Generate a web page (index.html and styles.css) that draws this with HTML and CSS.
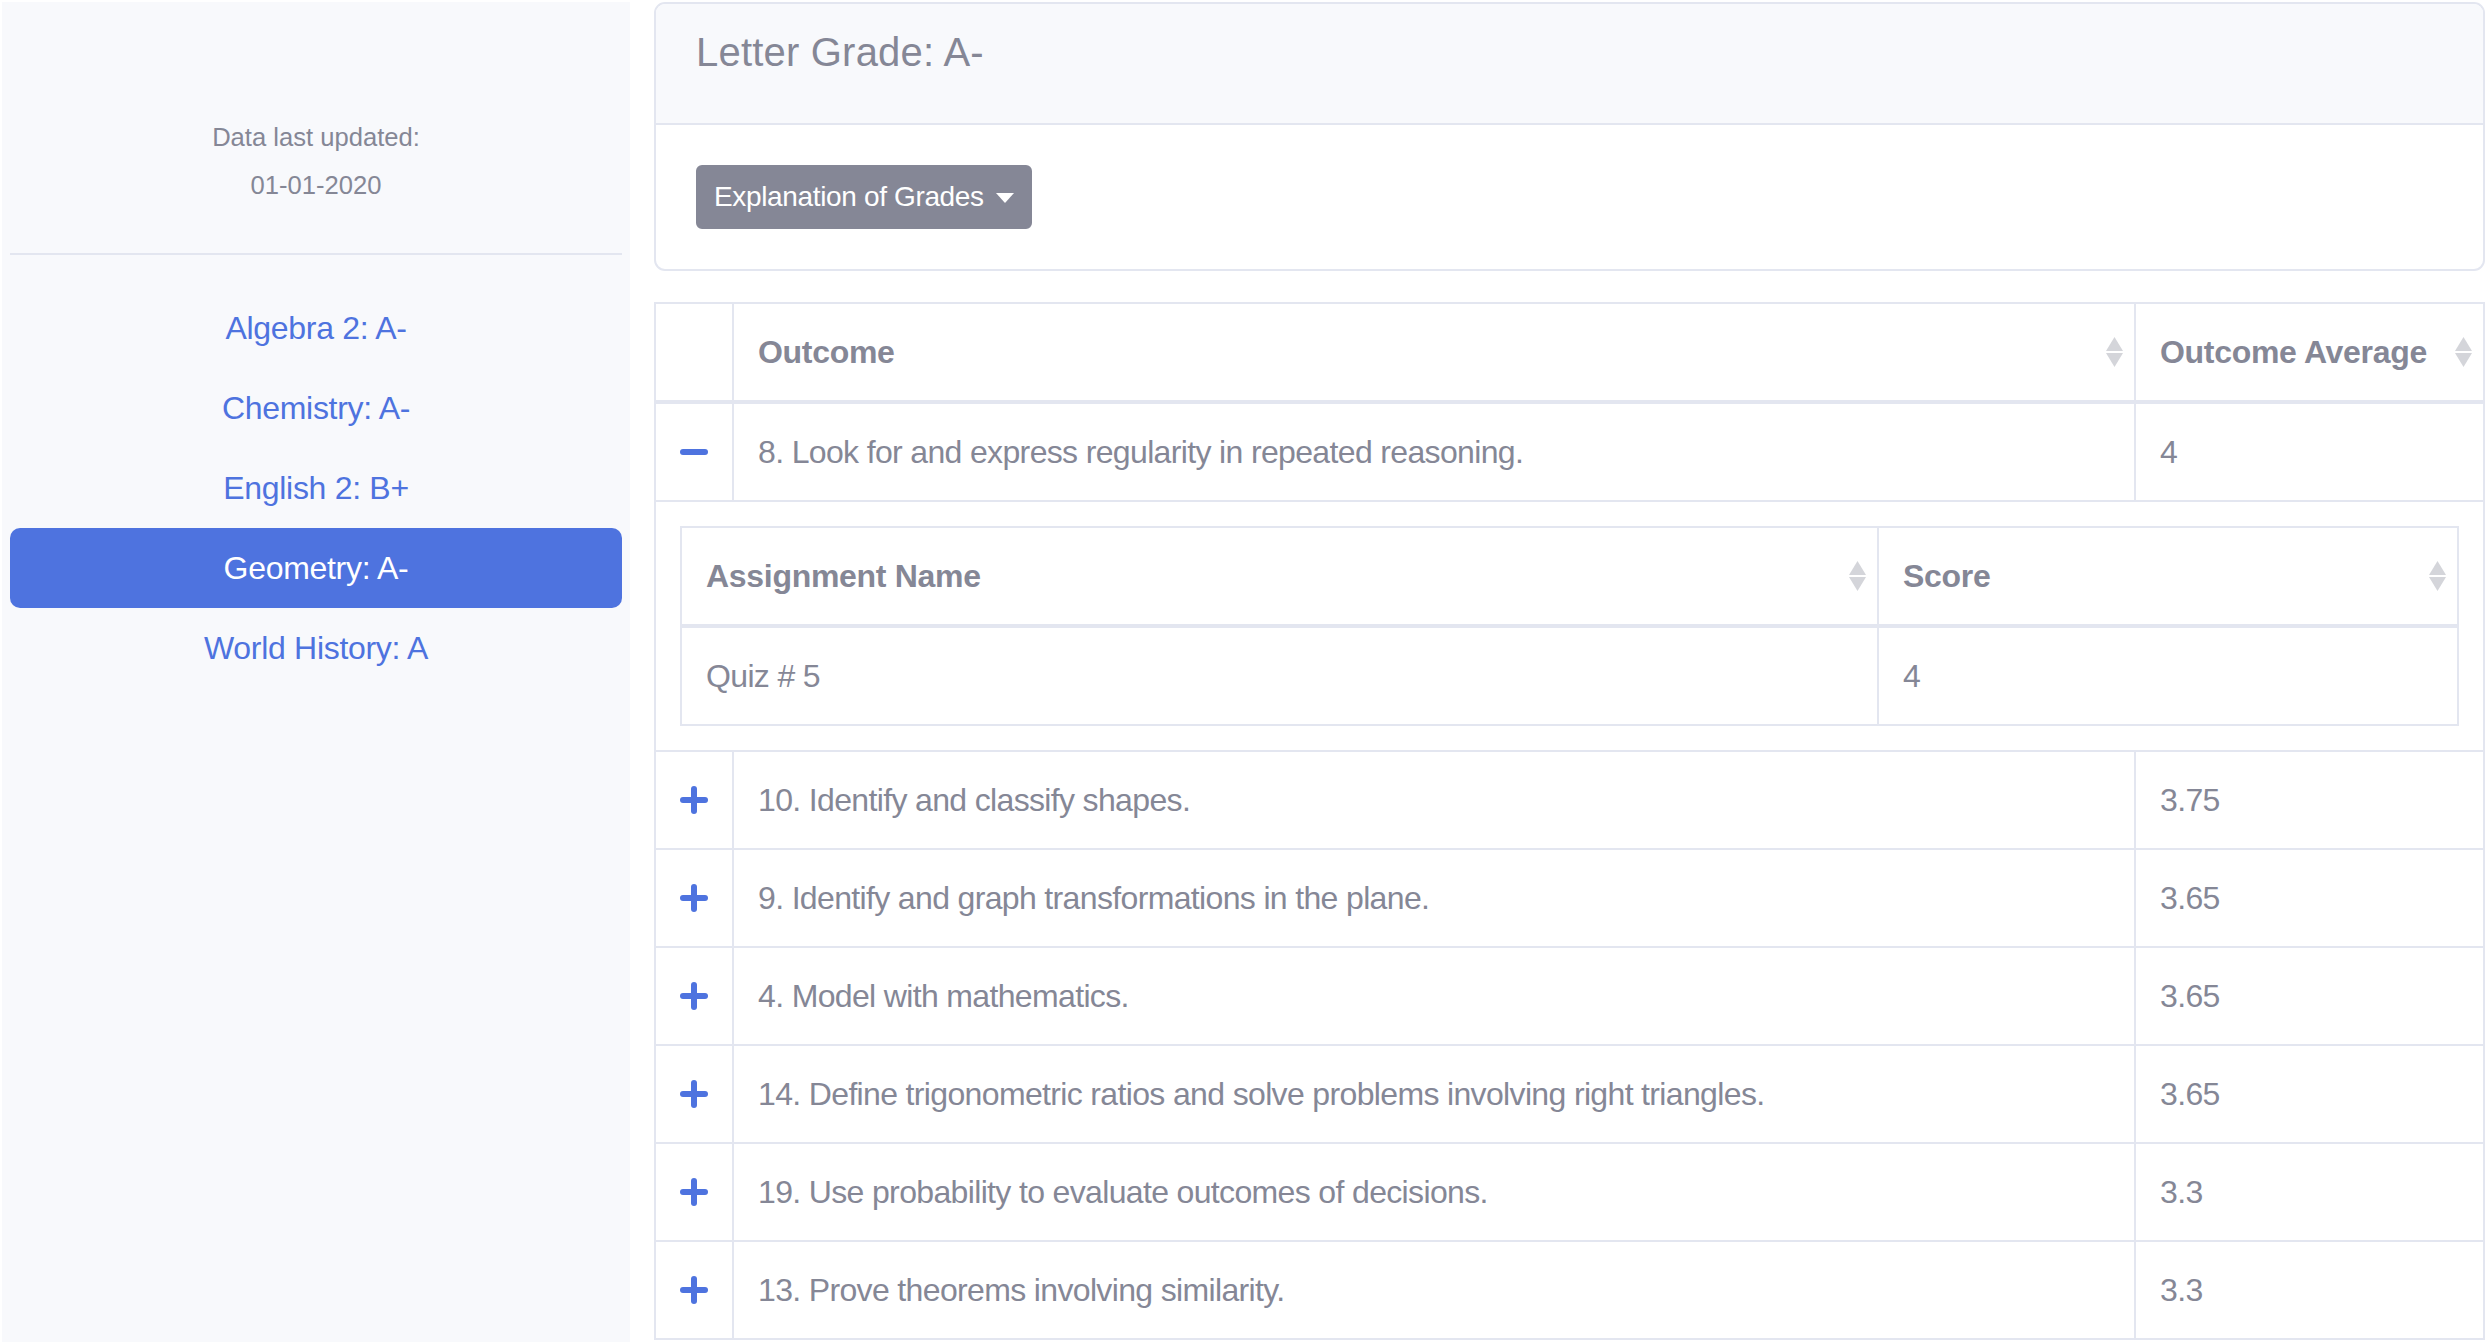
FILE: index.html
```html
<!DOCTYPE html>
<html lang="en">
<head>
<meta charset="utf-8">
<title>Grades</title>
<link rel="stylesheet" href="styles.css">
</head>
<body>
<div class="page">
  <aside class="sidebar">
    <div class="updated">
      <div>Data last updated:</div>
      <div>01-01-2020</div>
    </div>
    <hr class="divider">
    <nav class="nav">
      <a class="nav-link" href="#">Algebra 2: A-</a>
      <a class="nav-link" href="#">Chemistry: A-</a>
      <a class="nav-link" href="#">English 2: B+</a>
      <a class="nav-link active" href="#">Geometry: A-</a>
      <a class="nav-link" href="#">World History: A</a>
    </nav>
  </aside>

  <main class="main">
    <section class="card">
      <div class="card-header">
        <h4 class="grade-title">Letter Grade: A-</h4>
      </div>
      <div class="card-body">
        <button class="btn" type="button">Explanation of Grades<span class="caret"></span></button>
      </div>
    </section>

    <table class="outcomes">
      <colgroup>
        <col class="col-icon">
        <col>
        <col class="col-avg">
      </colgroup>
      <thead>
        <tr>
          <th></th>
          <th><div class="th-flex"><span>Outcome</span><svg class="sort" viewBox="0 0 17 30" width="17" height="30"><path d="M8.5 0 L17 14 L0 14 Z"/><path d="M0 16 L17 16 L8.5 30 Z"/></svg></div></th>
          <th><div class="th-flex"><span>Outcome Average</span><svg class="sort" viewBox="0 0 17 30" width="17" height="30"><path d="M8.5 0 L17 14 L0 14 Z"/><path d="M0 16 L17 16 L8.5 30 Z"/></svg></div></th>
        </tr>
      </thead>
      <tbody>
        <tr>
          <td class="icon-cell"><svg class="toggle" viewBox="0 0 28 28" width="28" height="28"><line x1="3" y1="14" x2="25" y2="14"/></svg></td>
          <td>8. Look for and express regularity in repeated reasoning.</td>
          <td>4</td>
        </tr>
        <tr class="detail-row">
          <td colspan="3" class="detail-cell">
            <table class="assignments">
              <colgroup>
                <col>
                <col class="col-score">
              </colgroup>
              <thead>
                <tr>
                  <th><div class="th-flex"><span>Assignment Name</span><svg class="sort" viewBox="0 0 17 30" width="17" height="30"><path d="M8.5 0 L17 14 L0 14 Z"/><path d="M0 16 L17 16 L8.5 30 Z"/></svg></div></th>
                  <th><div class="th-flex"><span>Score</span><svg class="sort" viewBox="0 0 17 30" width="17" height="30"><path d="M8.5 0 L17 14 L0 14 Z"/><path d="M0 16 L17 16 L8.5 30 Z"/></svg></div></th>
                </tr>
              </thead>
              <tbody>
                <tr>
                  <td>Quiz # 5</td>
                  <td>4</td>
                </tr>
              </tbody>
            </table>
          </td>
        </tr>
        <tr>
          <td class="icon-cell"><svg class="toggle" viewBox="0 0 28 28" width="28" height="28"><line x1="3" y1="14" x2="25" y2="14"/><line x1="14" y1="3" x2="14" y2="25"/></svg></td>
          <td>10. Identify and classify shapes.</td>
          <td>3.75</td>
        </tr>
        <tr>
          <td class="icon-cell"><svg class="toggle" viewBox="0 0 28 28" width="28" height="28"><line x1="3" y1="14" x2="25" y2="14"/><line x1="14" y1="3" x2="14" y2="25"/></svg></td>
          <td>9. Identify and graph transformations in the plane.</td>
          <td>3.65</td>
        </tr>
        <tr>
          <td class="icon-cell"><svg class="toggle" viewBox="0 0 28 28" width="28" height="28"><line x1="3" y1="14" x2="25" y2="14"/><line x1="14" y1="3" x2="14" y2="25"/></svg></td>
          <td>4. Model with mathematics.</td>
          <td>3.65</td>
        </tr>
        <tr>
          <td class="icon-cell"><svg class="toggle" viewBox="0 0 28 28" width="28" height="28"><line x1="3" y1="14" x2="25" y2="14"/><line x1="14" y1="3" x2="14" y2="25"/></svg></td>
          <td>14. Define trigonometric ratios and solve problems involving right triangles.</td>
          <td>3.65</td>
        </tr>
        <tr>
          <td class="icon-cell"><svg class="toggle" viewBox="0 0 28 28" width="28" height="28"><line x1="3" y1="14" x2="25" y2="14"/><line x1="14" y1="3" x2="14" y2="25"/></svg></td>
          <td>19. Use probability to evaluate outcomes of decisions.</td>
          <td>3.3</td>
        </tr>
        <tr>
          <td class="icon-cell"><svg class="toggle" viewBox="0 0 28 28" width="28" height="28"><line x1="3" y1="14" x2="25" y2="14"/><line x1="14" y1="3" x2="14" y2="25"/></svg></td>
          <td>13. Prove theorems involving similarity.</td>
          <td>3.3</td>
        </tr>
      </tbody>
    </table>
  </main>
</div>
</body>
</html>
```

FILE: styles.css
```css
html, body {
  margin: 0;
  padding: 0;
  height: 100%;
  overflow: hidden;
  background: #ffffff;
}

body {
  font-family: "Liberation Sans", Arial, sans-serif;
  color: #858796;
  font-size: 32px;
  line-height: 48px;
}

.page {
  display: flex;
  gap: 24px;
  padding: 2px 3px 0 2px;
  height: 100vh;
  box-sizing: border-box;
}

/* Sidebar */
.sidebar {
  width: 628px;
  flex: 0 0 628px;
  background: #f8f9fc;
  padding: 0 8px;
  box-sizing: border-box;
  display: flex;
  flex-direction: column;
}

.updated {
  padding-top: 111px;
  font-size: 25.6px;
  line-height: 48px;
  text-align: center;
  color: #858796;
}

.divider {
  margin: 44px 0 0 0;
  border: 0;
  border-top: 2px solid #e3e6f0;
  height: 0;
}

.nav {
  margin-top: 33px;
  display: flex;
  flex-direction: column;
}

.nav-link {
  display: block;
  padding: 16px 32px;
  text-align: center;
  color: #4e73df;
  text-decoration: none;
  font-size: 32px;
  line-height: 48px;
  letter-spacing: -0.3px;
  border-radius: 10px;
}

.nav-link.active {
  background: #4e73df;
  color: #ffffff;
}

/* Main */
.main {
  flex: 1 1 auto;
  min-width: 0;
}

.card {
  border: 2px solid #e3e6f0;
  border-radius: 11px;
  overflow: hidden;
  background: #fff;
}

.card-header {
  background: #f8f9fc;
  border-bottom: 2px solid #e3e6f0;
  padding: 24px 40px 47px 40px;
}

.grade-title {
  margin: 0;
  font-size: 40px;
  line-height: 48px;
  font-weight: 400;
  letter-spacing: 0.2px;
  color: #858796;
}

.card-body {
  padding: 40px 40px 40px 40px;
}

.btn {
  display: inline-flex;
  align-items: center;
  font-family: inherit;
  font-size: 28px;
  line-height: 42px;
  letter-spacing: -0.35px;
  padding: 9px 16px 9px 16px;
  color: #ffffff;
  background: #858796;
  border: 2px solid #858796;
  border-radius: 6px;
  cursor: pointer;
}

.caret {
  display: inline-block;
  width: 0;
  height: 0;
  margin-left: 12px;
  margin-top: 2px;
  border-top: 10px solid #ffffff;
  border-left: 9px solid transparent;
  border-right: 9px solid transparent;
}

/* Tables */
.outcomes {
  margin-top: 31px;
  width: 100%;
  border-collapse: collapse;
  table-layout: fixed;
}

.col-icon {
  width: 78px;
}

.col-avg {
  width: 349px;
}

.col-score {
  width: 580px;
}

.outcomes th,
.outcomes td {
  border: 2px solid #e3e6f0;
  padding: 24px;
  text-align: left;
  vertical-align: middle;
  font-size: 32px;
  line-height: 48px;
  letter-spacing: -0.65px;
  white-space: nowrap;
}

.outcomes thead th {
  border-bottom-width: 4px;
  font-weight: 700;
  letter-spacing: -0.3px;
  padding-right: 11px;
}

.th-flex {
  display: flex;
  align-items: center;
  justify-content: space-between;
}

.sort {
  display: block;
  fill: #d4d5da;
}

.icon-cell {
  text-align: center;
  padding: 24px 0;
}

.icon-cell .toggle {
  display: block;
  margin: 0 auto;
  stroke: #4e73df;
  stroke-width: 6;
  stroke-linecap: round;
}

.outcomes td.detail-cell {
  padding: 24px;
}

.assignments {
  width: 100%;
  border-collapse: collapse;
  table-layout: fixed;
}
```
